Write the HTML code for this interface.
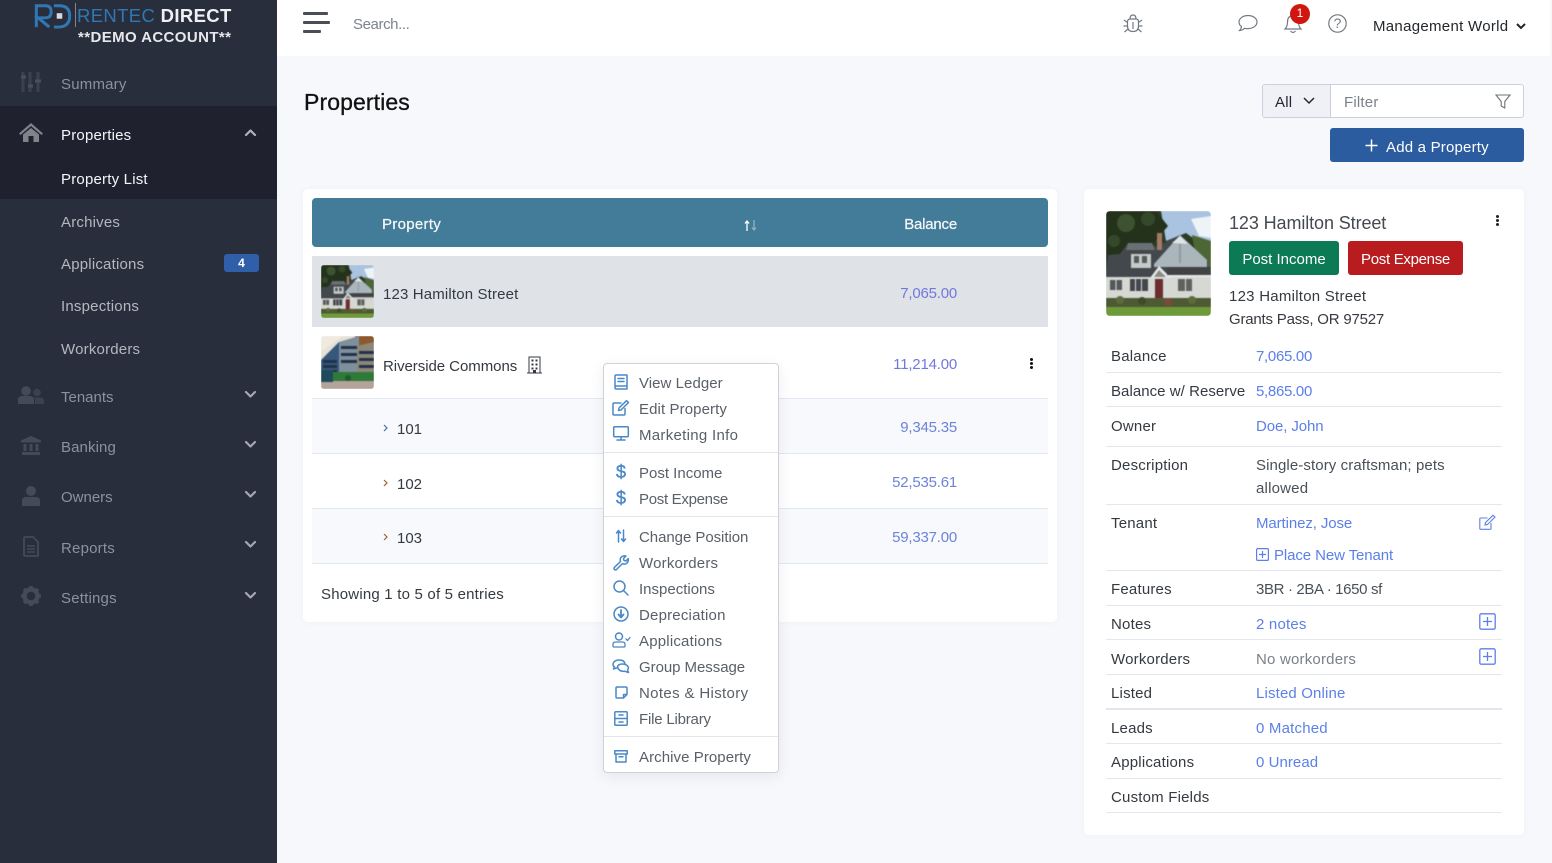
<!DOCTYPE html>
<html lang="en"><head><meta charset="utf-8"><title>Properties</title>
<style>
*{box-sizing:border-box}
html,body{margin:0;padding:0;width:1552px;height:863px;overflow:hidden;background:#f7f8fc}
body{position:relative;font-family:"Liberation Sans",Arial,sans-serif;font-size:15px;color:#343a40;letter-spacing:.2px}
.a{position:absolute}
.t{position:absolute;line-height:20px;white-space:nowrap;margin-top:1px}
.r{text-align:right}
.nav{color:#8b919e}
.wh{color:#f4f5f8}
.lnk{color:#5c80e8}
.m{color:#5a6068}
.bal{color:#7278dc}
.n{letter-spacing:-.2px}
.ln{position:absolute;left:1106px;width:396px;height:1px;background:#e2e6ee}
.sep{position:absolute;left:604px;width:174px;height:1px;background:#e3e5e8}
svg{position:absolute;display:block;overflow:visible}
.ic{fill:none;stroke:#4a88c7;stroke-width:1.5;stroke-linecap:round;stroke-linejoin:round}
.sn{fill:#454a58}
.ch{fill:none;stroke:#a4a8b0;stroke-width:2.2;stroke-linecap:round;stroke-linejoin:round}
.pw{position:absolute;overflow:hidden}
.pw svg{left:0;top:0;filter:blur(.5px)}
</style></head><body>

<svg width="0" height="0" style="position:absolute"><defs>
<symbol id="house" viewBox="0 0 105 105" preserveAspectRatio="none">
<rect width="105" height="105" fill="#2c3c24"/>
<path d="M55 0H105V40L80 22 60 30Z" fill="#a9c3e0"/>
<path d="M85 8l20-3v22l-12-2z" fill="#eef3f8"/>
<path d="M0 0H50L62 15 45 35 0 50Z" fill="#24321b"/>
<circle cx="20" cy="12" r="9" fill="#3c5230"/><circle cx="42" cy="8" r="7" fill="#34482a"/><circle cx="8" cy="30" r="6" fill="#34482a"/>
<path d="M86 24l19 6v28l-14-6z" fill="#4d6636"/>
<path d="M0 66L2 44 14 43 22 32H44L50 36 74 24 102 50V66Z" fill="#43484d"/>
<path d="M48 53L74 24 101 49 101 56 48 56Z" fill="#aab5bc"/>
<path d="M66 32L74 25 82 33Z" fill="#dfe4e8"/><path d="M73 33H75V52H73Z" fill="#8f9aa1"/>
<path d="M25 43H45V57H25Z" fill="#c6cac9"/><rect x="28" y="45" width="5" height="7" fill="#55595a"/><rect x="36" y="45" width="5" height="7" fill="#55595a"/>
<path d="M22 32H46L49 39H20Z" fill="#6b7074"/>
<rect x="51" y="22" width="5" height="17" fill="#a37a66"/>
<path d="M0 66H105V92H0Z" fill="#d6d8d4"/>
<path d="M44 67L53 55 65 67Z" fill="#e6e8e8"/><path d="M48 66L53 59 60 66Z" fill="#8a8c86"/>
<path d="M61 56H105V64H61Z" fill="#3f4344"/><rect x="61" y="64" width="44" height="2" fill="#e8e8e4"/>
<rect x="49" y="68" width="8" height="20" fill="#6d2c2f"/>
<rect x="4" y="69" width="12" height="10" fill="#55585a"/><rect x="9.500" y="69" width="1" height="10" fill="#ddd"/>
<rect x="24" y="68" width="18" height="12" fill="#43464a"/><rect x="29" y="68" width="1" height="12" fill="#ddd"/><rect x="35" y="68" width="1" height="12" fill="#ddd"/>
<rect x="72" y="68" width="14" height="12" fill="#5f625e"/><rect x="79" y="68" width="1" height="12" fill="#ddd"/>
<path d="M0 87H105V96H0Z" fill="#4d5a32"/>
<circle cx="14" cy="89" r="4" fill="#5e6c3c"/><circle cx="36" cy="90" r="4" fill="#3f4b2b"/><circle cx="62" cy="91" r="4" fill="#7a4a3a"/><circle cx="86" cy="89" r="4" fill="#5e6c3c"/>
<path d="M0 96H105V105H0Z" fill="#6f9a3c"/>
</symbol>
<symbol id="apt" viewBox="0 0 53 53" preserveAspectRatio="none">
<rect width="53" height="53" fill="#e6e2d8"/>
<path d="M0 0H22L8 10 0 16Z" fill="#efe9df"/>
<path d="M34 0H53V8L38 14Z" fill="#8d5a30"/>
<path d="M18 6L38 0V36H18Z" fill="#7f8f9c"/>
<path d="M0 24L18 6V38H0Z" fill="#36587c"/>
<path d="M36 10L53 6V36H36Z" fill="#8b887a"/>
<path d="M2 24H16V27H2ZM2 29H16V32H2ZM2 34H16V37H2ZM20 10H36V13H20ZM20 17H36V20H20ZM20 24H36V27H20ZM38 15H53V18H38ZM38 22H53V25H38ZM38 29H53V32H38Z" fill="#22324a"/>
<path d="M0 36H53V45H0Z" fill="#2f7a38"/>
<path d="M0 45H53V53H0Z" fill="#b3a39b"/>
<rect x="0" y="34" width="12" height="12" fill="#1f4a5c"/><circle cx="27" cy="42" r="3" fill="#1e5a2a"/>
</symbol>
</defs></svg>

<!-- sidebar -->
<div class="a" style="left:0;top:0;width:277px;height:863px;background:#292e3d"></div>
<div class="a" style="left:0;top:106px;width:277px;height:93px;background:#1f222e"></div>

<!-- logo -->
<svg style="left:34px;top:3px" width="38" height="25" viewBox="0 0 40 27"><path d="M2 26V3H12Q18 3 18 9.500T12 16H4L16 26" fill="none" stroke="#2f78b4" stroke-width="3.200"/><path d="M21 3H27Q38 3 38 14T27 26H21" fill="none" stroke="#2f78b4" stroke-width="3.200"/><rect x="24" y="11" width="6" height="6" fill="#d8dadd"/></svg>
<div class="a" style="left:75px;top:3px;width:1px;height:24px;background:#7f8590"></div>
<div class="t" style="left:77px;top:5px;font-size:18.5px;letter-spacing:.35px;color:#2f78b4">RENTEC <span style="color:#eef0f3;font-weight:bold">DIRECT</span></div>
<div class="t" style="left:78px;top:27px;font-size:15px;letter-spacing:.4px;font-weight:bold;color:#e6e8ea">**DEMO ACCOUNT**</div>

<!-- sidebar items -->
<svg style="left:21px;top:71px" width="20" height="22" viewBox="0 0 20 22"><path d="M2 1V21M9 1V21M17 1V21" stroke="#3c4150" stroke-width="3"/><path d="M0 6H5M7 15H12M14 10H20" stroke="#4a4f5e" stroke-width="3"/></svg>
<div class="t nav" style="left:61px;top:74px">Summary</div>

<svg style="left:19px;top:123px" width="24" height="19" viewBox="0 0 24 19"><path d="M12 0L0 10.500 1.500 12 12 3 22.500 12 24 10.500Z" fill="#808389"/><path d="M4 11.500L12 5 20 11.500V19H14.500V13H9.500V19H4Z" fill="#808389"/></svg>
<div class="t wh" style="left:61px;top:125px">Properties</div>
<svg style="left:245px;top:129px" width="11" height="7" viewBox="0 0 11 7"><path class="ch" d="M1 6L5.500 1.500 10 6" style="stroke:#b0b3b9"/></svg>
<div class="t wh" style="left:61px;top:169px">Property List</div>
<div class="t nav" style="left:61px;top:212px;color:#b4b7be">Archives</div>
<div class="t nav" style="left:61px;top:254px;color:#b4b7be">Applications</div>
<div class="a" style="left:224px;top:254px;width:35px;height:18px;background:#2e5fa8;border-radius:3px;color:#fff;font-size:12px;font-weight:bold;line-height:18px;text-align:center">4</div>
<div class="t nav" style="left:61px;top:296px;color:#b4b7be">Inspections</div>
<div class="t nav" style="left:61px;top:339px;color:#b4b7be">Workorders</div>

<svg style="left:18px;top:386px" width="26" height="18" viewBox="0 0 26 18"><circle cx="8" cy="5" r="4.800" fill="#454a58"/><path d="M0 18V14Q0 10 4 10H12Q16 10 16 14V18Z" fill="#454a58"/><circle cx="19" cy="6.500" r="3.800" fill="#3c4150"/><path d="M17 18V14Q17 12 15.500 11.500H23Q26 12 26 15V18Z" fill="#3c4150"/></svg>
<div class="t nav" style="left:61px;top:387px;letter-spacing:0">Tenants</div>
<svg style="left:245px;top:391px" width="11" height="7" viewBox="0 0 11 7"><path class="ch" d="M1 1L5.500 5.500 10 1"/></svg>

<svg style="left:21px;top:436px" width="20" height="19" viewBox="0 0 20 19"><path d="M10 0L20 4.500V6.500H0V4.500Z" class="sn"/><path d="M2.500 8H5.500V15H2.500ZM8.500 8H11.500V15H8.500ZM14.500 8H17.500V15H14.500ZM1 16H19V19H1Z" class="sn"/></svg>
<div class="t nav" style="left:61px;top:437px;letter-spacing:.1px">Banking</div>
<svg style="left:245px;top:441px" width="11" height="7" viewBox="0 0 11 7"><path class="ch" d="M1 1L5.500 5.500 10 1"/></svg>

<svg style="left:22px;top:486px" width="18" height="20" viewBox="0 0 18 20"><circle cx="9" cy="5" r="5" class="sn"/><path d="M0 20V15Q0 11 4 11H14Q18 11 18 15V20Z" class="sn"/></svg>
<div class="t nav" style="left:61px;top:487px;letter-spacing:0">Owners</div>
<svg style="left:245px;top:491px" width="11" height="7" viewBox="0 0 11 7"><path class="ch" d="M1 1L5.500 5.500 10 1"/></svg>

<svg style="left:23px;top:536px" width="16" height="21" viewBox="0 0 16 21"><path d="M2 1H10L15 6V19Q15 20 14 20H2Q1 20 1 19V2Q1 1 2 1Z" fill="none" stroke="#454a58" stroke-width="1.800"/><path d="M4 10H12M4 13H12M4 16H12" stroke="#454a58" stroke-width="1.400"/></svg>
<div class="t nav" style="left:61px;top:538px">Reports</div>
<svg style="left:245px;top:541px" width="11" height="7" viewBox="0 0 11 7"><path class="ch" d="M1 1L5.500 5.500 10 1"/></svg>

<svg style="left:21px;top:586px" width="20" height="20" viewBox="0 0 20 20"><circle cx="10" cy="10" r="6.500" fill="none" stroke="#454a58" stroke-width="4.500"/><path d="M10 0V3M10 17V20M0 10H3M17 10H20M3 3L5 5M15 15L17 17M17 3L15 5M5 15L3 17" stroke="#454a58" stroke-width="3.600"/></svg>
<div class="t nav" style="left:61px;top:588px">Settings</div>
<svg style="left:245px;top:592px" width="11" height="7" viewBox="0 0 11 7"><path class="ch" d="M1 1L5.500 5.500 10 1"/></svg>

<!-- top bar -->
<div class="a" style="left:277px;top:0;width:1273px;height:56px;background:#fff"></div>
<div class="a" style="left:303px;top:12px;width:25px;height:3px;background:#4a4f57;border-radius:1px"></div>
<div class="a" style="left:303px;top:21px;width:27px;height:3px;background:#4a4f57;border-radius:1px"></div>
<div class="a" style="left:303px;top:30px;width:18px;height:3px;background:#4a4f57;border-radius:1px"></div>
<div class="t" style="left:353px;top:14px;color:#7b8490;letter-spacing:-.4px">Search...</div>

<svg style="left:1123px;top:13px" width="20" height="20" viewBox="0 0 20 20"><path d="M4.500 9Q4.500 6 7 6H13Q15.500 6 15.500 9V13Q15.500 18.500 10 18.500T4.500 13ZM7 6Q7 2 10 2T13 6M10 9V16M1 7L4.500 9.500M19 7L15.500 9.500M.5 13H4.500M19.500 13H15.500M1.500 19L5 16M18.500 19L15 16" fill="none" stroke="#747a84" stroke-width="1.200"/></svg>
<svg style="left:1238px;top:14px" width="20" height="18" viewBox="0 0 20 18"><path d="M10 1.500C5 1.500 1 4.500 1 8C1 10 2 11.500 3.500 12.500C3.500 14 2.500 15.500 1.500 16.500C3.500 16.500 5.500 15.500 6.500 14.300C7.500 14.500 8.800 14.600 10 14.600C15 14.600 19 11.700 19 8S15 1.500 10 1.500Z" fill="none" stroke="#747a84" stroke-width="1.200"/></svg>
<svg style="left:1284px;top:14px" width="18" height="20" viewBox="0 0 18 20"><path d="M9 1.500Q3.500 2 3.500 8C3.500 11.500 2.500 13.500 1 15H17C15.500 13.500 14.500 11.500 14.500 8Q14.500 2 9 1.500ZM6.500 17Q9 20 11.500 17" fill="none" stroke="#747a84" stroke-width="1.200"/></svg>
<div class="a" style="left:1290px;top:4px;width:20px;height:20px;border-radius:50%;background:#d1160f;color:#fff;font-size:12px;line-height:19px;text-align:center;letter-spacing:0">1</div>
<svg style="left:1328px;top:14px" width="19" height="19" viewBox="0 0 19 19"><circle cx="9.500" cy="9.500" r="8.700" fill="none" stroke="#747a84" stroke-width="1.200"/></svg>
<div class="t" style="left:1328px;top:12px;width:19px;text-align:center;color:#747a84;font-size:14px;letter-spacing:0">?</div>
<div class="t" style="left:1373px;top:16px;color:#23272b;letter-spacing:.3px">Management World</div>
<svg style="left:1516px;top:23px" width="10" height="7" viewBox="0 0 10 7"><path d="M1 1L5 5 9 1" fill="none" stroke="#212529" stroke-width="2"/></svg>

<!-- title -->
<div class="t" style="left:304px;top:88px;font-size:23px;line-height:26px;color:#111;letter-spacing:.1px;-webkit-text-stroke:.3px #111">Properties</div>

<!-- filter -->
<div class="a" style="left:1262px;top:84px;width:262px;height:34px;background:#fff;border:1px solid #ccd0da;border-radius:3px"></div>
<div class="a" style="left:1263px;top:85px;width:68px;height:32px;background:#eff1f6;border-right:1px solid #ccd0da;border-radius:3px 0 0 3px"></div>
<div class="t" style="left:1275px;top:92px;color:#24282e">All</div>
<svg style="left:1303px;top:97px" width="12" height="7" viewBox="0 0 12 7"><path d="M1 1L6 6 11 1" fill="none" stroke="#24282e" stroke-width="1.500"/></svg>
<div class="t" style="left:1344px;top:92px;color:#7b818a">Filter</div>
<svg style="left:1495px;top:94px" width="16" height="15" viewBox="0 0 16 15"><path d="M1 1H15L9.800 7.500V14L6.200 12V7.500Z" fill="none" stroke="#6d737c" stroke-width="1.100"/></svg>

<div class="a" style="left:1330px;top:128px;width:194px;height:34px;background:#2b5ca0;border-radius:3px"></div>
<svg style="left:1365px;top:139px" width="13" height="13" viewBox="0 0 13 13"><path d="M6.500 .5V12.500M.5 6.500H12.500" stroke="#fff" stroke-width="1.500"/></svg>
<div class="t" style="left:1386px;top:137px;color:#fff">Add a Property</div>

<!-- list card -->
<div class="a" style="left:303px;top:189px;width:754px;height:433px;background:#fff;border-radius:5px;box-shadow:0 0 6px rgba(80,90,120,.05)"></div>
<div class="a" style="left:312px;top:198px;width:736px;height:49px;background:#437c99;border-radius:4px"></div>
<div class="t" style="left:382px;top:214px;color:#f2f6f8;-webkit-text-stroke:.25px #f2f6f8;letter-spacing:.3px">Property</div>
<svg style="left:743px;top:220px" width="16" height="11" viewBox="0 0 16 11"><path d="M4 11V1.500M2 3.500L4 1 6 3.500" fill="none" stroke="#fff" stroke-width="1.300"/><path d="M11 0V9.500M9 7.500L11 10 13 7.500" fill="none" stroke="#8eb0c2" stroke-width="1.300"/></svg>
<div class="t r" style="left:857px;top:214px;width:100px;color:#f2f6f8;letter-spacing:-.2px;-webkit-text-stroke:.25px #f2f6f8">Balance</div>

<div class="a" style="left:312px;top:256px;width:736px;height:71px;background:#dfe2e6"></div>
<div class="pw" style="left:321px;top:265px;width:53px;height:53px;border-radius:3px"><svg width="53" height="53"><use href="#house" width="53" height="53"/></svg></div>
<div class="t" style="left:383px;top:284px;letter-spacing:.15px">123 Hamilton Street</div>
<div class="t r bal n" style="left:857px;top:283px;width:100px">7,065.00</div>

<div class="a" style="left:312px;top:398px;width:736px;height:1px;background:#e2e8f2"></div>
<div class="pw" style="left:321px;top:336px;width:53px;height:53px;border-radius:3px"><svg width="53" height="53"><use href="#apt" width="53" height="53"/></svg></div>
<div class="t" style="left:383px;top:356px;letter-spacing:-.05px">Riverside Commons</div>
<svg style="left:527px;top:356px" width="15" height="18" viewBox="0 0 15 18"><path d="M2 17V1H13V17M0 17H15" fill="none" stroke="#343a40" stroke-width="1"/><path d="M4.500 3.500H6.500V5.500H4.500ZM8.500 3.500H10.500V5.500H8.500ZM4.500 7.500H6.500V9.500H4.500ZM8.500 7.500H10.500V9.500H8.500ZM4.500 11.500H6.500V13.500H4.500ZM8.500 11.500H10.500V13.500H8.500ZM6 14H9V17H6Z" fill="#343a40"/></svg>
<div class="t r bal n" style="left:857px;top:354px;width:100px">11,214.00</div>
<div class="a" style="left:1030px;top:358px;width:3px;height:3px;background:#111;border-radius:50%;box-shadow:0 4px 0 #111,0 8px 0 #111"></div>

<div class="a" style="left:312px;top:399px;width:736px;height:55px;background:#f8f9fc;border-bottom:1px solid #e2e8f2"></div>
<div class="a" style="left:312px;top:454px;width:736px;height:55px;background:#fff;border-bottom:1px solid #e2e8f2"></div>
<div class="a" style="left:312px;top:509px;width:736px;height:55px;background:#f8f9fc;border-bottom:1px solid #e2e8f2"></div>
<svg style="left:383px;top:424px" width="5" height="8" viewBox="0 0 5 8"><path d="M1 1L4 4 1 7" fill="none" stroke="#3f6fa8" stroke-width="1.200"/></svg>
<svg style="left:383px;top:479px" width="5" height="8" viewBox="0 0 5 8"><path d="M1 1L4 4 1 7" fill="none" stroke="#a0622d" stroke-width="1.200"/></svg>
<svg style="left:383px;top:533px" width="5" height="8" viewBox="0 0 5 8"><path d="M1 1L4 4 1 7" fill="none" stroke="#a0622d" stroke-width="1.200"/></svg>
<div class="t n" style="left:397px;top:419px;letter-spacing:0">101</div>
<div class="t n" style="left:397px;top:474px;letter-spacing:0">102</div>
<div class="t n" style="left:397px;top:528px;letter-spacing:0">103</div>
<div class="t r n" style="left:857px;top:417px;width:100px;color:#6c84d8">9,345.35</div>
<div class="t r n" style="left:857px;top:472px;width:100px;color:#6c84d8">52,535.61</div>
<div class="t r n" style="left:857px;top:527px;width:100px;color:#6c84d8">59,337.00</div>
<div class="t" style="left:321px;top:584px">Showing 1 to 5 of 5 entries</div>

<!-- dropdown -->
<div class="a" style="left:603px;top:363px;width:176px;height:410px;background:#fff;border:1px solid #cfd2d6;border-radius:4px;box-shadow:0 4px 14px rgba(30,40,60,.08)"></div>
<div class="sep" style="top:452px"></div><div class="sep" style="top:516px"></div><div class="sep" style="top:736px"></div>

<svg class="ic" style="left:614px;top:374px" width="14" height="16" viewBox="0 0 14 16"><path d="M1 12.500V2Q1 1 2 1H13V15H2.500Q1 15 1 13.500T2.500 12H13M4 4.500H10M4 7.500H10"/></svg>
<div class="t m" style="left:639px;top:373px;letter-spacing:.05px">View Ledger</div>
<svg class="ic" style="left:612px;top:400px" width="18" height="16" viewBox="0 0 18 16"><path d="M13 8.500V14Q13 15 12 15H2Q1 15 1 14V4Q1 3 2 3H9M7 8L6.500 10.500 9 10 16.500 2.500 14.500 .7Z"/></svg>
<div class="t m" style="left:639px;top:399px;letter-spacing:.1px">Edit Property</div>
<svg class="ic" style="left:613px;top:426px" width="16" height="15" viewBox="0 0 16 15"><rect x=".7" y=".7" width="14.600" height="10" rx="1"/><path d="M8 11V14M4 14H12"/></svg>
<div class="t m" style="left:639px;top:425px;letter-spacing:.3px">Marketing Info</div>
<div class="t" style="left:616px;top:461px;width:10px;text-align:center;color:#4a88c7;font-size:18px;-webkit-text-stroke:.4px #4a88c7;letter-spacing:0">$</div>
<div class="t m" style="left:639px;top:463px;letter-spacing:0">Post Income</div>
<div class="t" style="left:616px;top:487px;width:10px;text-align:center;color:#4a88c7;font-size:18px;-webkit-text-stroke:.4px #4a88c7;letter-spacing:0">$</div>
<div class="t m" style="left:639px;top:489px;letter-spacing:-.3px">Post Expense</div>
<svg class="ic" style="left:616px;top:529px" width="10" height="14" viewBox="0 0 10 14"><path d="M2.500 13V2M.5 4L2.500 1.500 4.500 4M7.500 1V12M5.500 10L7.500 12.500 9.500 10" /></svg>
<div class="t m" style="left:639px;top:527px;letter-spacing:-.05px">Change Position</div>
<svg class="ic" style="left:613px;top:555px" width="16" height="15" viewBox="0 0 16 15"><path d="M1.500 14.500Q.5 13.500 1.500 12.300L7.500 6.500Q6.500 3 9 1.500Q11 .5 13 1L10.500 3.500 11 5.500 13 6 15.200 3.500Q15.800 6 14 8T9.500 8.500L3.500 14.500Q2.500 15.300 1.500 14.500Z"/></svg>
<div class="t m" style="left:639px;top:553px">Workorders</div>
<svg class="ic" style="left:613px;top:580px" width="16" height="16" viewBox="0 0 16 16"><circle cx="6.500" cy="6.500" r="5.500"/><path d="M10.500 10.500L15 15"/></svg>
<div class="t m" style="left:639px;top:579px;letter-spacing:0">Inspections</div>
<svg class="ic" style="left:613px;top:606px" width="16" height="16" viewBox="0 0 16 16"><circle cx="8" cy="8" r="7"/><path d="M8 4V11M5.500 8.500L8 11.500 10.500 8.500" stroke-width="1.800"/></svg>
<div class="t m" style="left:639px;top:605px">Depreciation</div>
<svg class="ic" style="left:612px;top:632px" width="19" height="16" viewBox="0 0 19 16"><circle cx="7" cy="4.500" r="3.500"/><path d="M1 14V12.500Q1 10 3.500 10H10.500Q13 10 13 12.500V14Q13 15 12 15H2Q1 15 1 14ZM14 7L15.500 8.500 18 5.500" stroke-width="1.300"/></svg>
<div class="t m" style="left:639px;top:631px">Applications</div>
<svg class="ic" style="left:612px;top:659px" width="18" height="15" viewBox="0 0 18 15"><path d="M7 1C3.500 1 1 3 1 5.500Q1 7 2.500 8L1.500 10 4.500 9M5.500 8Q6 5 10.500 5T16.500 8.500Q16.500 10 15.500 11L16.500 13.500 13 12.300Q7 13 5.500 8ZM13 5Q12.500 1 7 1"/></svg>
<div class="t m" style="left:639px;top:657px;letter-spacing:-.05px">Group Message</div>
<svg class="ic" style="left:615px;top:686px" width="13" height="13" viewBox="0 0 13 13"><path d="M8.500 12H2Q1 12 1 11V2Q1 1 2 1H11Q12 1 12 2V8.500ZM8.500 12V8.500H12"/></svg>
<div class="t m" style="left:639px;top:683px;letter-spacing:.35px">Notes &amp; History</div>
<svg class="ic" style="left:614px;top:711px" width="14" height="15" viewBox="0 0 14 15"><rect x=".8" y=".8" width="12.400" height="13.400" rx="1"/><path d="M1 7.500H13M5 4H9M5 11H9"/></svg>
<div class="t m" style="left:639px;top:709px;letter-spacing:-.2px">File Library</div>
<svg class="ic" style="left:614px;top:750px" width="14" height="13" viewBox="0 0 14 13"><path d="M.8 .8H13.200V4H.8ZM2 4V12H12V4M5 6.800H9"/></svg>
<div class="t m" style="left:639px;top:747px;letter-spacing:.07px">Archive Property</div>

<!-- detail card -->
<div class="a" style="left:1084px;top:189px;width:440px;height:646px;background:#fff;border-radius:5px;box-shadow:0 0 6px rgba(80,90,120,.05)"></div>
<div class="pw" style="left:1106px;top:211px;width:105px;height:105px;border-radius:4px"><svg width="105" height="105"><use href="#house" width="105" height="105"/></svg></div>
<div class="t" style="left:1229px;top:212px;font-size:18px;color:#454a50;letter-spacing:-.1px">123 Hamilton Street</div>
<div class="a" style="left:1496px;top:215px;width:3px;height:3px;background:#222;border-radius:50%;box-shadow:0 4px 0 #222,0 8px 0 #222"></div>
<div class="a" style="left:1229px;top:241px;width:110px;height:34px;background:#0c7a55;border-radius:3px;color:#fff;line-height:37px;text-align:center;letter-spacing:0">Post Income</div>
<div class="a" style="left:1348px;top:241px;width:115px;height:34px;background:#b81c1f;border-radius:3px;color:#fff;line-height:37px;text-align:center;letter-spacing:-.3px">Post Expense</div>
<div class="t" style="left:1229px;top:286px;letter-spacing:.25px">123 Hamilton Street</div>
<div class="t" style="left:1229px;top:309px;letter-spacing:-.2px">Grants Pass, OR 97527</div>

<div class="t" style="left:1111px;top:346px">Balance</div><div class="t lnk" style="left:1256px;top:346px;letter-spacing:-.3px">7,065.00</div>
<div class="ln" style="top:372px"></div>
<div class="t" style="left:1111px;top:381px;letter-spacing:.05px">Balance w/ Reserve</div><div class="t lnk" style="left:1256px;top:381px;letter-spacing:-.3px">5,865.00</div>
<div class="ln" style="top:406px"></div>
<div class="t" style="left:1111px;top:416px">Owner</div><div class="t lnk" style="left:1256px;top:416px;letter-spacing:-.1px">Doe, John</div>
<div class="ln" style="top:446px"></div>
<div class="t" style="left:1111px;top:455px">Description</div><div class="t" style="left:1256px;top:455px;color:#495057;letter-spacing:.1px">Single-story craftsman; pets</div>
<div class="t" style="left:1256px;top:478px;color:#495057">allowed</div>
<div class="ln" style="top:504px"></div>
<div class="t" style="left:1111px;top:513px">Tenant</div><div class="t lnk" style="left:1256px;top:513px;letter-spacing:-.1px">Martinez, Jose</div>
<svg style="left:1479px;top:515px" width="17" height="15" viewBox="0 0 17 15"><path d="M12 8V13.500Q12 14.300 11 14.300H1.800Q.8 14.300 .8 13.500V3.800Q.8 3 1.800 3H8.500M6.500 7.500L6 10 8.500 9.500 16 2 14 .3Z" fill="none" stroke="#5c80e8" stroke-width="1.100"/></svg>
<svg style="left:1256px;top:548px" width="13" height="13" viewBox="0 0 13 13"><rect x=".6" y=".6" width="11.800" height="11.800" rx="1" fill="none" stroke="#5c80e8" stroke-width="1.200"/><path d="M6.500 3V10M3 6.500H10" stroke="#5c80e8" stroke-width="1.200"/></svg>
<div class="t lnk" style="left:1274px;top:545px;letter-spacing:-.1px">Place New Tenant</div>
<div class="ln" style="top:570px"></div>
<div class="t" style="left:1111px;top:579px">Features</div><div class="t" style="left:1256px;top:579px;color:#495057;letter-spacing:-.35px">3BR · 2BA · 1650 sf</div>
<div class="ln" style="top:605px"></div>
<div class="t" style="left:1111px;top:614px">Notes</div><div class="t lnk" style="left:1256px;top:614px">2 notes</div>
<svg style="left:1479px;top:613px" width="18" height="18" viewBox="0 0 18 18"><rect x=".8" y=".8" width="15.400" height="15.400" rx="1.500" fill="none" stroke="#5c80e8" stroke-width="1.300"/><path d="M8.500 4V13M4 8.500H13" stroke="#5c80e8" stroke-width="1.300"/></svg>
<div class="ln" style="top:639px"></div>
<div class="t" style="left:1111px;top:649px">Workorders</div><div class="t" style="left:1256px;top:649px;color:#7b8087;letter-spacing:.2px">No workorders</div>
<svg style="left:1479px;top:648px" width="18" height="18" viewBox="0 0 18 18"><rect x=".8" y=".8" width="15.400" height="15.400" rx="1.500" fill="none" stroke="#5c80e8" stroke-width="1.300"/><path d="M8.500 4V13M4 8.500H13" stroke="#5c80e8" stroke-width="1.300"/></svg>
<div class="ln" style="top:674px"></div>
<div class="t" style="left:1111px;top:683px">Listed</div><div class="t lnk" style="left:1256px;top:683px;letter-spacing:.15px">Listed Online</div>
<div class="ln" style="top:708px;height:2px"></div>
<div class="t" style="left:1111px;top:718px">Leads</div><div class="t lnk" style="left:1256px;top:718px">0 Matched</div>
<div class="ln" style="top:743px"></div>
<div class="t" style="left:1111px;top:752px">Applications</div><div class="t lnk" style="left:1256px;top:752px;letter-spacing:.05px">0 Unread</div>
<div class="ln" style="top:778px"></div>
<div class="t" style="left:1111px;top:787px">Custom Fields</div>
<div class="ln" style="top:812px"></div>

</body></html>
